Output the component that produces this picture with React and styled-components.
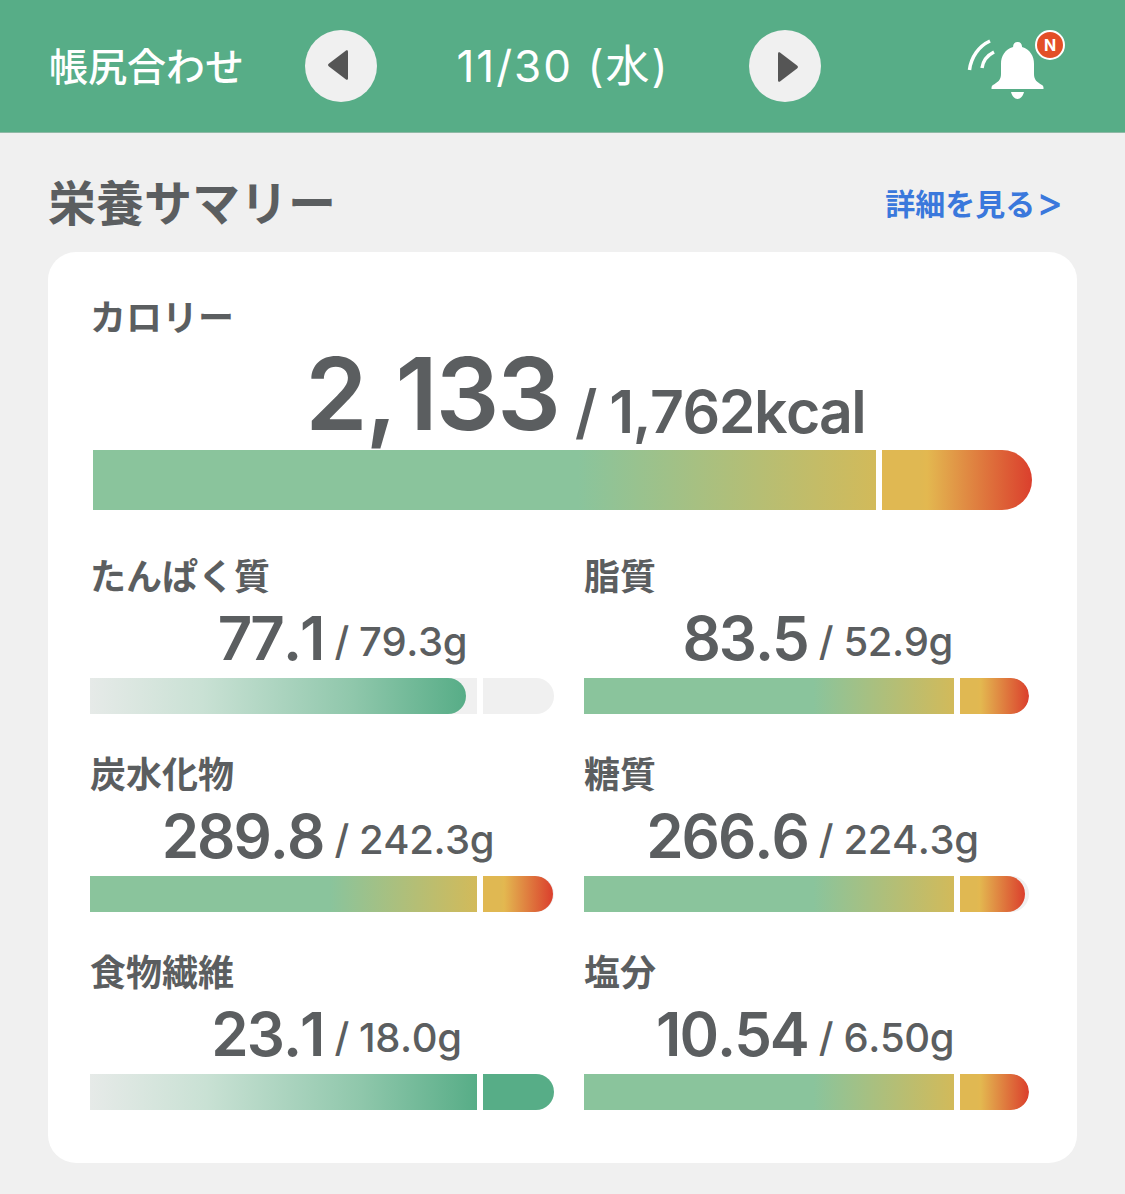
import styled, { createGlobalStyle } from "styled-components";

const GREEN = "#57ad87";
const INK = "#5b5e60";

const GlobalStyle = createGlobalStyle`
  html, body {
    margin: 0;
    background: #f0f0f0;
  }

  body {
    font-family: Inter, "Noto Sans CJK JP", sans-serif;
    color: ${INK};
  }
`;

const Page = styled.div`
  width: 1125px;
  height: 1194px;
  overflow: hidden;
`;

const Header = styled.header`
  display: grid;
  grid-template-columns: 1fr 516px 1fr;
  align-items: center;
  box-sizing: border-box;
  height: 133px;
  padding: 0 49px 0 50px;
  background: ${GREEN};
  border-bottom: 1px solid #8fb9a6;
`;

const HeaderTitle = styled.h1`
  margin: 0 0 0 -1px;
  font-size: 39px;
  font-weight: 500;
  line-height: 1;
  color: #fff;
`;

const DateNav = styled.nav`
  display: flex;
  align-items: center;
  justify-content: space-between;
`;

const DateText = styled.span`
  font-size: 44px;
  font-weight: 400;
  line-height: 1;
  letter-spacing: 2px;
  color: #fff;
`;

const RoundButton = styled.button`
  display: flex;
  align-items: center;
  justify-content: center;
  box-sizing: border-box;
  width: 72px;
  height: 72px;
  padding: ${(p) => (p.$back ? "0 6px 2px 0" : "2px 0 0 6px")};
  border: 0;
  border-radius: 50%;
  background: #f0f0f0;
`;

const Bell = styled.div`
  position: relative;
  justify-self: end;
  width: 103px;
  height: 76px;
  margin-right: 8px;
`;

const Badge = styled.span`
  position: absolute;
  top: 2px;
  right: 3px;
  display: flex;
  align-items: center;
  justify-content: center;
  box-sizing: border-box;
  width: 30px;
  height: 30px;
  border: 2px solid #fff;
  border-radius: 50%;
  background: #e34f26;
  font-size: 16px;
  font-weight: 700;
  color: #fff;
`;

const SectionHead = styled.div`
  display: flex;
  align-items: center;
  justify-content: space-between;
  box-sizing: border-box;
  height: 119px;
  padding: 22px 62px 0 48px;
`;

const SectionTitle = styled.h2`
  margin: 0;
  font-size: 48px;
  font-weight: 600;
  line-height: 1;
`;

const DetailLink = styled.a`
  display: flex;
  align-items: center;
  font-size: 30px;
  font-weight: 600;
  line-height: 1;
  color: #3a78dc;
`;

const Chevron = styled.span`
  margin: -4px 0 0 1px;
  font-size: 40px;
  font-weight: 500;
  line-height: 30px;
`;

const Card = styled.section`
  box-sizing: border-box;
  width: 1029px;
  height: 911px;
  margin-left: 48px;
  padding: 46px 48px 0 42px;
  border-radius: 28px;
  background: #fff;
`;

const Label = styled.div`
  font-size: 36px;
  font-weight: 600;
  line-height: 40px;
`;

const CalorieValue = styled.div`
  display: grid;
  grid-template-columns: 466px 1fr;
  column-gap: 16px;
  height: 112px;
  margin-left: 3px;
`;

const Amount = styled.span`
  justify-self: end;
  margin-top: ${(p) => p.$top}px;
  font-size: ${(p) => p.$size}px;
  font-weight: 600;
  font-kerning: none;
  line-height: 1;
  letter-spacing: -2px;
`;

const Target = styled.span`
  margin-top: ${(p) => p.$top}px;
  font-size: ${(p) => p.$size}px;
  font-weight: ${(p) => p.$weight};
  font-kerning: none;
  line-height: 1;
  letter-spacing: ${(p) => p.$track}px;
`;

const StatGrid = styled.div`
  display: grid;
  grid-template-columns: 464px 445px;
  column-gap: 30px;
  row-gap: 41px;
  margin-top: 47px;
`;

const StatValue = styled.div`
  display: grid;
  grid-template-columns: 50.3% 1fr;
  column-gap: 11px;
  height: 81px;
`;

const Meter = styled.div`
  display: flex;
  gap: 6px;
  height: ${(p) => p.$height}px;
  margin-left: ${(p) => p.$inset || 0}px;
  width: ${(p) => p.$width || "auto"};
`;

const Segment = styled.div`
  flex: ${(p) => (p.$wide ? `0 0 ${p.$wide}px` : "1")};
  overflow: hidden;
  background: ${(p) => p.$bg};
  border-radius: ${(p) => (p.$wide ? "0" : `0 ${p.$radius}px ${p.$radius}px 0`)};
`;

const Fill = styled.div`
  height: 100%;
  background: ${(p) => p.$bg};
  border-radius: ${(p) => p.$radius || "0"};
`;

const TRACK = "#f0f0f0";
const BAR_OVER_A = "linear-gradient(90deg, #8ac49c 0 62%, #d2ba5a 100%)";
const BAR_OVER_B = "linear-gradient(90deg, #e0b852 0 25%, #e3b850 30%, #db3f2d 100%)";
const BAR_BUILD = "linear-gradient(90deg, #e6eae8 0%, #c9e1d4 30%, #8fc7ab 70%, #57ad87 100%)";

const STATS = [
  { label: "たんぱく質", amount: "77.1", target: "79.3g", kind: "under", fill: 376 },
  { label: "脂質", amount: "83.5", target: "52.9g", kind: "over" },
  { label: "炭水化物", amount: "289.8", target: "242.3g", kind: "over", rest: 98 },
  { label: "糖質", amount: "266.6", target: "224.3g", kind: "over", rest: 94 },
  { label: "食物繊維", amount: "23.1", target: "18.0g", kind: "full" },
  { label: "塩分", amount: "10.54", target: "6.50g", kind: "over" },
];

function StatMeter({ stat, wide }) {
  const radius = 18;

  if (stat.kind === "under") {
    return (
      <Meter $height={36}>
        <Segment $wide={wide} $bg={TRACK}>
          <Fill
            $bg={BAR_BUILD}
            $radius={`0 ${radius}px ${radius}px 0`}
            style={{ width: stat.fill }}
          />
        </Segment>
        <Segment $bg={TRACK} $radius={radius} />
      </Meter>
    );
  }

  if (stat.kind === "full") {
    return (
      <Meter $height={36}>
        <Segment $wide={wide} $bg={BAR_BUILD} />
        <Segment $bg={GREEN} $radius={radius} />
      </Meter>
    );
  }

  return (
    <Meter $height={36}>
      <Segment $wide={wide} $bg={BAR_OVER_A} />
      <Segment $bg={TRACK} $radius={radius}>
        <Fill
          $bg={BAR_OVER_B}
          $radius={`0 ${radius}px ${radius}px 0`}
          style={{ width: stat.rest ? `${stat.rest}%` : "100%" }}
        />
      </Segment>
    </Meter>
  );
}

function Triangle({ left }) {
  return (
    <svg width="20" height="30" viewBox="0 0 20 30" fill="#555">
      {left ? (
        <path d="M18 .6 1 13.500a1.900 1.900 0 0 0 0 3L18 29.400c.9.6 2 .1 2-1V1.600c0-1.100-1.100-1.600-2-1z" />
      ) : (
        <path d="M2 .6 19 13.500a1.900 1.900 0 0 1 0 3L2 29.400c-.9.6-2 .1-2-1V1.600C0 .5 1.100 0 2 .6z" />
      )}
    </svg>
  );
}

function BellIcon() {
  return (
    <svg width="103" height="76" viewBox="0 0 103 76" fill="none">
      <path
        fill="#fff"
        d="M52.500 14c-2.600 0-4.400 2-4.400 4.400v.6C40 21.500 36 28 36 36v10c0 6-3 8-8 11-1 .7-1.500 1.500-1.500 3v1h52v-1c0-1.500-.5-2.300-1.500-3-5-3-8-5-8-11V36c0-8-4-14.500-12-17v-.6c0-2.400-1.800-4.400-4.100-4.400z"
      />
      <path fill="#fff" d="M46 64h13c-1 4-3.500 7-6.500 7s-5.500-3-6.500-7z" />
      <path
        stroke="#fff"
        strokeWidth="3.500"
        d="M4.500 42C6 29 14 18 25 13M17 40c1-7 6-13 12-16"
      />
    </svg>
  );
}

export default function App() {
  return (
    <Page>
      <GlobalStyle />
      <Header>
        <HeaderTitle>帳尻合わせ</HeaderTitle>
        <DateNav>
          <RoundButton $back aria-label="前の日">
            <Triangle left />
          </RoundButton>
          <DateText>11/30 (水)</DateText>
          <RoundButton aria-label="次の日">
            <Triangle />
          </RoundButton>
        </DateNav>
        <Bell>
          <BellIcon />
          <Badge>N</Badge>
        </Bell>
      </Header>

      <SectionHead>
        <SectionTitle>栄養サマリー</SectionTitle>
        <DetailLink>
          詳細を見る<Chevron>&gt;</Chevron>
        </DetailLink>
      </SectionHead>

      <Card>
        <Label>カロリー</Label>
        <CalorieValue>
          <Amount $size={100} $top={6}>2,133</Amount>
          <Target $size={59} $top={44} $weight={600} $track={-1.5}>/ 1,762kcal</Target>
        </CalorieValue>
        <Meter $height={60} $inset={3} $width="939px">
          <Segment $wide={783} $bg={BAR_OVER_A} />
          <Segment $bg={BAR_OVER_B} $radius={30} />
        </Meter>

        <StatGrid>
          {STATS.map((stat, index) => (
            <div key={stat.label}>
              <Label>{stat.label}</Label>
              <StatValue>
                <Amount $size={60} $top={11}>{stat.amount}</Amount>
                <Target $size={40} $top={25} $weight={500} $track={-0.4}>/ {stat.target}</Target>
              </StatValue>
              <StatMeter stat={stat} wide={index % 2 === 0 ? 387 : 370} />
            </div>
          ))}
        </StatGrid>
      </Card>
    </Page>
  );
}
